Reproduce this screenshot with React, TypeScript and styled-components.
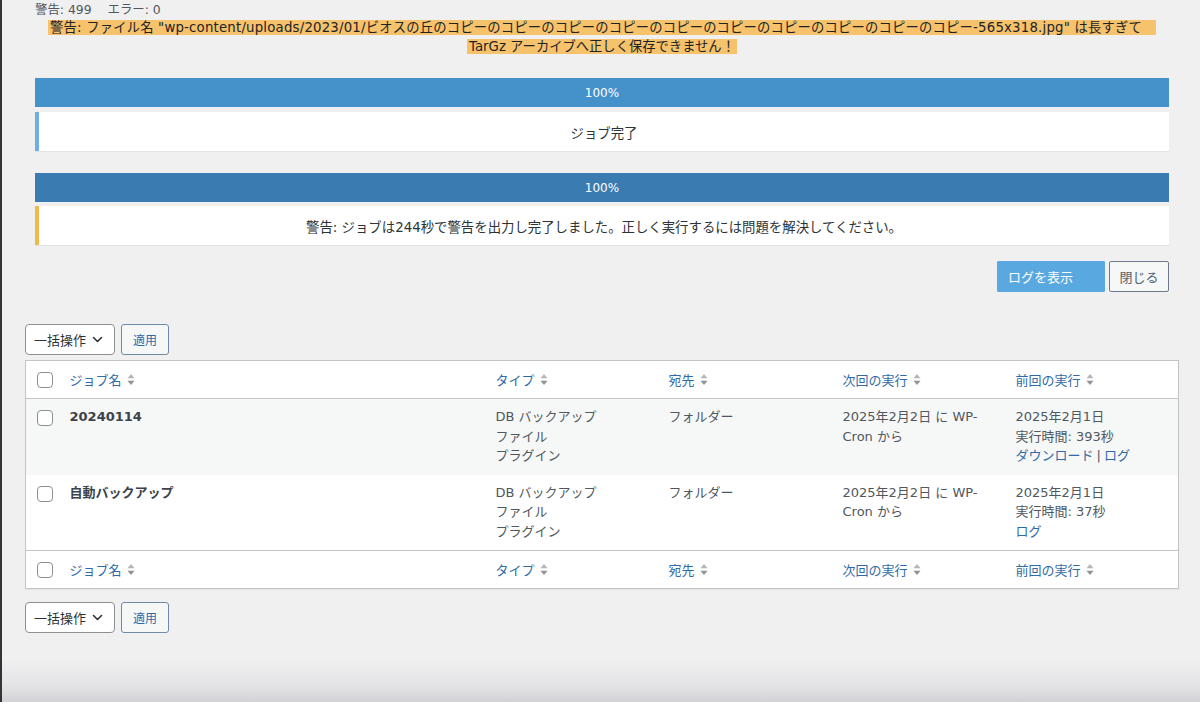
import React from "react";
import styled, { createGlobalStyle } from "styled-components";

const GlobalStyle = createGlobalStyle`
  html, body { margin: 0; padding: 0; }
  body {
    min-height: 702px;
    background: linear-gradient(to bottom, #f0f0f1 0, #f0f0f1 660px, #e4e4e7 685px, #d2d2d6 702px);
    font-family: "DejaVu Sans", "Noto Sans CJK JP", sans-serif;
    color: #3c434a;
    font-size: 13px;
    border-left: 2px solid #333438;
    box-sizing: border-box;
  }
  * { box-sizing: border-box; }
`;

const Page = styled.div`
  padding: 2px 21px 0 23px;
`;

const Inner = styled.div`
  padding: 0 10px;
`;

const Status = styled.div`
  font-size: 12.4px;
  line-height: 16px;
  color: #50575e;
  display: flex;
  gap: 16px;
`;

const Warning = styled.div`
  text-align: center;
  line-height: 19px;
  font-size: 13.3px;
  color: #1d2327;
  white-space: nowrap;
`;

const Mark = styled.span<{ $tail?: number; $spread?: number }>`
  background: #f6c26b;
  padding: 0 ${(p) => p.$tail ?? 2}px 0 2px;
  letter-spacing: ${(p) => p.$spread ?? 0}px;
`;

const Bar = styled.div<{ $dark?: boolean }>`
  height: 29px;
  background: ${(p) => (p.$dark ? "#3a7cb2" : "#4592cb")};
  color: #fff;
  font-size: 12px;
  display: flex;
  align-items: center;
  justify-content: center;
  margin-top: 22px;
`;

const Notice = styled.div<{ $tone: "info" | "warn"; $gap: number }>`
  margin-top: ${(p) => p.$gap}px;
  height: 39px;
  background: #fff;
  border-left: 4px solid ${(p) => (p.$tone === "warn" ? "#f0b849" : "#72aee6")};
  box-shadow: 0 1px 1px rgba(0, 0, 0, 0.05);
  display: flex;
  align-items: center;
  justify-content: center;
  font-size: 13.4px;
  color: #2c3338;
`;

const ButtonRow = styled.div`
  display: flex;
  justify-content: flex-end;
  gap: 4px;
  margin-top: 16px;
`;

const PrimaryBtn = styled.button`
  width: 108px;
  height: 31px;
  background: #5aa8e0;
  border: 1px solid #5aa8e0;
  color: #fff;
  font: inherit;
  font-size: 13px;
  text-align: left;
  padding: 0 0 0 10px;
  border-radius: 1px;
`;

const SecondaryBtn = styled.button`
  width: 60px;
  height: 31px;
  background: #f6f7f7;
  border: 1px solid #6d7c8c;
  color: #50626f;
  font: inherit;
  font-size: 13px;
  border-radius: 2px;
  padding: 0;
`;

const Bulk = styled.div<{ $top: number }>`
  display: flex;
  gap: 6px;
  margin-top: ${(p) => p.$top}px;
`;

const Select = styled.div`
  width: 90px;
  height: 31px;
  background: #fff;
  border: 1px solid #8c8f94;
  border-radius: 4px;
  display: flex;
  align-items: center;
  padding: 0 0 0 8px;
  gap: 6px;
  color: #2c3338;
  font-size: 13px;
`;

const ApplyBtn = styled.button`
  width: 48px;
  height: 31px;
  background: #f6f7f7;
  border: 1px solid #6f8aa6;
  border-radius: 3px;
  color: #2f6aa6;
  font: inherit;
  font-size: 12px;
  padding: 0;
`;

const TableWrap = styled.table`
  margin-top: 5px;
  width: 1154px;
  border: 1px solid #c3c4c7;
  border-collapse: collapse;
  table-layout: fixed;
  background: #fff;
  box-shadow: 0 1px 1px rgba(0, 0, 0, 0.04);
`;

const HeadCell = styled.th<{ $foot?: boolean }>`
  height: 38px;
  text-align: left;
  font-weight: 400;
  padding: 0 10px;
  color: #2f6aa6;
  font-size: 13px;
  vertical-align: middle;
  border-bottom: ${(p) => (p.$foot ? "none" : "1px solid #c3c4c7")};
  border-top: ${(p) => (p.$foot ? "1px solid #c3c4c7" : "none")};
`;

const HeadInner = styled.span`
  display: inline-flex;
  align-items: center;
  gap: 5px;
`;

const CbCell = styled.td`
  padding: 0 0 0 11px;
  vertical-align: top;
`;

const CbHead = styled.th<{ $foot?: boolean }>`
  padding: 0 0 0 11px;
  height: 38px;
  text-align: left;
  vertical-align: middle;
  border-bottom: ${(p) => (p.$foot ? "none" : "1px solid #c3c4c7")};
  border-top: ${(p) => (p.$foot ? "1px solid #c3c4c7" : "none")};
`;

const Checkbox = styled.span<{ $row?: boolean }>`
  display: block;
  width: 16px;
  height: 16px;
  border: 1px solid #8c8f94;
  border-radius: 4px;
  background: #fff;
  margin-top: ${(p) => (p.$row ? "11px" : "0")};
`;

const Row = styled.tr<{ $alt?: boolean }>`
  background: ${(p) => (p.$alt ? "#f6f7f7" : "#fff")};
  height: 76px;
`;

const Cell = styled.td<{ $bold?: boolean }>`
  padding: 8px 10px 9px;
  vertical-align: top;
  line-height: 19.5px;
  font-size: 13px;
  color: ${(p) => (p.$bold ? "#3c434a" : "#50575e")};
  font-weight: ${(p) => (p.$bold ? 700 : 400)};
`;

const Line = styled.div``;

const Link = styled.span`
  color: #2f6aa6;
`;

const Sep = styled.span`
  color: #50575e;
  margin: 0 3px;
`;

const SortIcon = () => (
  <svg width="8" height="13" viewBox="0 0 8 13" aria-hidden>
    <path d="M4 1 L7.5 5.2 L0.5 5.2 Z" fill="#b4b7ba" />
    <path d="M4 12 L7.5 7.8 L0.5 7.8 Z" fill="#8f9296" />
  </svg>
);

const Chevron = () => (
  <svg width="11" height="11" viewBox="0 0 11 11" aria-hidden>
    <path d="M1.5 3.5 L5.5 7.5 L9.5 3.5" fill="none" stroke="#2c3338" strokeWidth="1.6" strokeLinecap="round" strokeLinejoin="round" />
  </svg>
);

const headers = ["ジョブ名", "タイプ", "宛先", "次回の実行", "前回の実行"];

const HeaderRow = ({ foot }: { foot?: boolean }) => (
  <tr>
    <CbHead $foot={foot}>
      <Checkbox />
    </CbHead>
    {headers.map((h) => (
      <HeadCell key={h} $foot={foot}>
        <HeadInner>
          {h}
          <SortIcon />
        </HeadInner>
      </HeadCell>
    ))}
  </tr>
);

const BulkBar = ({ top }: { top: number }) => (
  <Bulk $top={top}>
    <Select>
      一括操作
      <Chevron />
    </Select>
    <ApplyBtn>適用</ApplyBtn>
  </Bulk>
);

const jobs = [
  { name: "20240114", time: "393秒", download: true },
  { name: "自動バックアップ", time: "37秒", download: false },
];

const fileName =
  "wp-content/uploads/2023/01/ビオスの丘" + "のコピー".repeat(10) + "-565x318.jpg";

export default function App() {
  return (
    <>
      <GlobalStyle />
      <Page>
        <Inner>
          <Status>
            <span>警告: 499</span>
            <span>エラー: 0</span>
          </Status>
          <Warning>
            <Mark $tail={14} $spread={0.2}>警告: ファイル名 "{fileName}" は長すぎて</Mark>
            <br />
            <Mark>TarGz アーカイブへ正しく保存できません！</Mark>
          </Warning>
          <Bar>100%</Bar>
          <Notice $tone="info" $gap={5}>ジョブ完了</Notice>
          <Bar $dark>100%</Bar>
          <Notice $tone="warn" $gap={4}>
            警告: ジョブは244秒で警告を出力し完了しました。正しく実行するには問題を解決してください。
          </Notice>
          <ButtonRow>
            <PrimaryBtn>ログを表示</PrimaryBtn>
            <SecondaryBtn>閉じる</SecondaryBtn>
          </ButtonRow>
        </Inner>
        <BulkBar top={32} />
        <TableWrap>
          <colgroup>
            <col style={{ width: 34 }} />
            <col style={{ width: 426 }} />
            <col style={{ width: 173 }} />
            <col style={{ width: 174 }} />
            <col style={{ width: 173 }} />
            <col />
          </colgroup>
          <thead>
            <HeaderRow />
          </thead>
          <tbody>
            {jobs.map((j, i) => (
              <Row key={j.name} $alt={i === 0}>
                <CbCell>
                  <Checkbox $row />
                </CbCell>
                <Cell $bold>{j.name}</Cell>
                <Cell>
                  <Line>DB バックアップ</Line>
                  <Line>ファイル</Line>
                  <Line>プラグイン</Line>
                </Cell>
                <Cell>フォルダー</Cell>
                <Cell>
                  2025年2月2日 に WP-
                  <br />
                  Cron から
                </Cell>
                <Cell>
                  <Line>2025年2月1日</Line>
                  <Line>実行時間: {j.time}</Line>
                  <Line>
                    {j.download ? (
                      <>
                        <Link>ダウンロード</Link>
                        <Sep>|</Sep>
                        <Link>ログ</Link>
                      </>
                    ) : (
                      <Link>ログ</Link>
                    )}
                  </Line>
                </Cell>
              </Row>
            ))}
          </tbody>
          <tfoot>
            <HeaderRow foot />
          </tfoot>
        </TableWrap>
        <BulkBar top={13} />
      </Page>
    </>
  );
}
